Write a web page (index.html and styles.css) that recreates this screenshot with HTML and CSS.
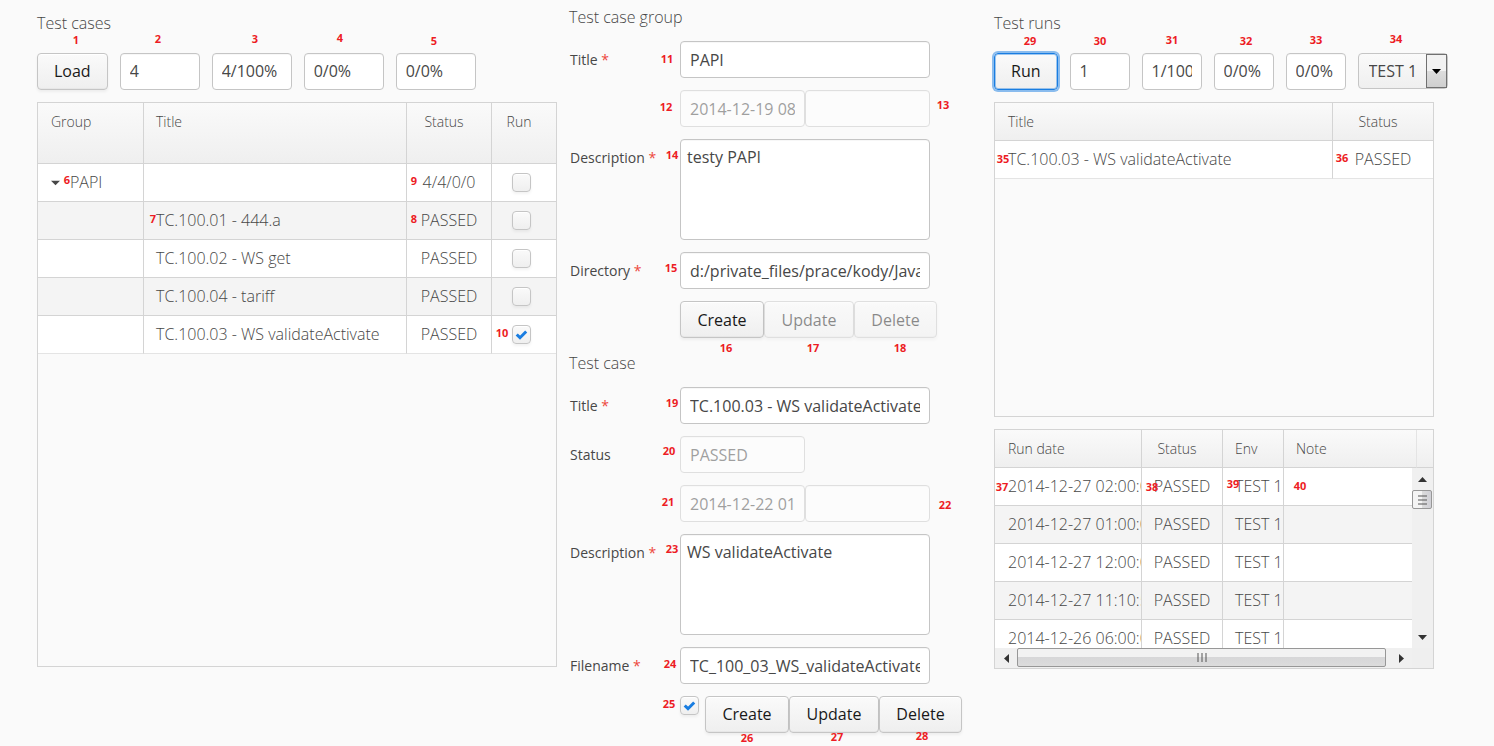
FILE: index.html
```html
<!DOCTYPE html>
<html lang="en">
<head>
<meta charset="utf-8">
<title>Test cases</title>
<link rel="stylesheet" href="styles.css">
</head>
<body>
<main class="page">

  <section class="panel">
    <h2 class="heading">Test cases</h2>
    <div class="toolbar">
      <button class="button" type="button">Load</button>
      <input class="field field-count" type="text" value="4" aria-label="Total">
      <input class="field field-count" type="text" value="4/100%" aria-label="Passed">
      <input class="field field-count" type="text" value="0/0%" aria-label="Failed">
      <input class="field field-count" type="text" value="0/0%" aria-label="Not run">
    </div>
    <div class="table-box cases-box">
      <table class="table cases">
        <colgroup><col class="col-group"><col><col class="col-result"><col class="col-run"></colgroup>
        <thead>
          <tr><th>Group</th><th>Title</th><th class="mid">Status</th><th class="mid">Run</th></tr>
        </thead>
        <tbody>
          <tr>
            <td><span class="node"><svg class="caret" viewBox="0 0 10 6" aria-hidden="true"><path d="M0 0.5h10L5 5.5z"/></svg>PAPI</span></td>
            <td></td><td class="mid">4/4/0/0</td>
            <td class="tick"><span class="check"><input type="checkbox" aria-label="Run PAPI"><svg viewBox="0 0 19 19" aria-hidden="true"><path d="M4.700 9.500l3.300 3.200 6.200-6.200"/></svg></span></td>
          </tr>
          <tr>
            <td></td><td>TC.100.01 - 444.a</td><td class="mid">PASSED</td>
            <td class="tick"><span class="check"><input type="checkbox" aria-label="Run TC.100.01"><svg viewBox="0 0 19 19" aria-hidden="true"><path d="M4.700 9.500l3.300 3.200 6.200-6.200"/></svg></span></td>
          </tr>
          <tr>
            <td></td><td>TC.100.02 - WS get</td><td class="mid">PASSED</td>
            <td class="tick"><span class="check"><input type="checkbox" aria-label="Run TC.100.02"><svg viewBox="0 0 19 19" aria-hidden="true"><path d="M4.700 9.500l3.300 3.200 6.200-6.200"/></svg></span></td>
          </tr>
          <tr>
            <td></td><td>TC.100.04 - tariff</td><td class="mid">PASSED</td>
            <td class="tick"><span class="check"><input type="checkbox" aria-label="Run TC.100.04"><svg viewBox="0 0 19 19" aria-hidden="true"><path d="M4.700 9.500l3.300 3.200 6.200-6.200"/></svg></span></td>
          </tr>
          <tr>
            <td></td><td>TC.100.03 - WS validateActivate</td><td class="mid">PASSED</td>
            <td class="tick"><span class="check"><input type="checkbox" checked aria-label="Run TC.100.03"><svg viewBox="0 0 19 19" aria-hidden="true"><path d="M4.700 9.500l3.300 3.200 6.200-6.200"/></svg></span></td>
          </tr>
        </tbody>
      </table>
    </div>
    <span class="pin pin-1">1</span><span class="pin pin-2">2</span><span class="pin pin-3">3</span>
    <span class="pin pin-4">4</span><span class="pin pin-5">5</span><span class="pin pin-6">6</span>
    <span class="pin pin-7">7</span><span class="pin pin-8">8</span><span class="pin pin-9">9</span>
    <span class="pin pin-10">10</span>
  </section>

  <section class="panel forms">
    <h2 class="heading">Test case group</h2>
    <div class="row">
      <label class="label" for="group-title">Title <span class="req">*</span></label>
      <input class="field field-wide" id="group-title" type="text" value="PAPI">
    </div>
    <div class="row">
      <div class="pair">
        <input class="field" type="text" value="2014-12-19 08" disabled aria-label="Group created">
        <input class="field" type="text" disabled aria-label="Group modified">
      </div>
    </div>
    <div class="row">
      <label class="label" for="group-desc">Description <span class="req">*</span></label>
      <textarea class="area" id="group-desc">testy PAPI</textarea>
    </div>
    <div class="row">
      <label class="label" for="group-dir">Directory <span class="req">*</span></label>
      <input class="field field-wide" id="group-dir" type="text" value="d:/private_files/prace/kody/Java/tests">
    </div>
    <div class="row">
      <div class="actions">
        <button class="button" type="button">Create</button>
        <button class="button" type="button" disabled>Update</button>
        <button class="button" type="button" disabled>Delete</button>
      </div>
    </div>

    <h2 class="heading">Test case</h2>
    <div class="row">
      <label class="label" for="case-title">Title <span class="req">*</span></label>
      <input class="field field-wide" id="case-title" type="text" value="TC.100.03 - WS validateActivate">
    </div>
    <div class="row">
      <label class="label" for="case-status">Status</label>
      <div class="pair"><input class="field" id="case-status" type="text" value="PASSED" disabled></div>
    </div>
    <div class="row">
      <div class="pair">
        <input class="field" type="text" value="2014-12-22 01" disabled aria-label="Case created">
        <input class="field" type="text" disabled aria-label="Case modified">
      </div>
    </div>
    <div class="row">
      <label class="label" for="case-desc">Description <span class="req">*</span></label>
      <textarea class="area" id="case-desc">WS validateActivate</textarea>
    </div>
    <div class="row">
      <label class="label" for="case-file">Filename <span class="req">*</span></label>
      <input class="field field-wide" id="case-file" type="text" value="TC_100_03_WS_validateActivate.xml">
    </div>
    <div class="row">
      <div class="actions actions-checked">
        <span class="check"><input type="checkbox" checked aria-label="Enabled"><svg viewBox="0 0 19 19" aria-hidden="true"><path d="M4.700 9.500l3.300 3.200 6.200-6.200"/></svg></span>
        <button class="button" type="button">Create</button>
        <button class="button" type="button">Update</button>
        <button class="button" type="button">Delete</button>
      </div>
    </div>
    <span class="pin pin-11">11</span><span class="pin pin-12">12</span><span class="pin pin-13">13</span>
    <span class="pin pin-14">14</span><span class="pin pin-15">15</span><span class="pin pin-16">16</span>
    <span class="pin pin-17">17</span><span class="pin pin-18">18</span><span class="pin pin-19">19</span>
    <span class="pin pin-20">20</span><span class="pin pin-21">21</span><span class="pin pin-22">22</span>
    <span class="pin pin-23">23</span><span class="pin pin-24">24</span><span class="pin pin-25">25</span>
    <span class="pin pin-26">26</span><span class="pin pin-27">27</span><span class="pin pin-28">28</span>
  </section>

  <section class="panel">
    <h2 class="heading">Test runs</h2>
    <div class="toolbar">
      <button class="button button-focus" type="button">Run</button>
      <input class="field field-small" type="text" value="1" aria-label="Runs">
      <input class="field field-small" type="text" value="1/100%" aria-label="Runs passed">
      <input class="field field-small" type="text" value="0/0%" aria-label="Runs failed">
      <input class="field field-small" type="text" value="0/0%" aria-label="Runs pending">
      <span class="picker">
        <select aria-label="Environment"><option>TEST 1</option></select>
        <span class="picker-arrow"><svg viewBox="0 0 9 5" aria-hidden="true"><path d="M0 0h9L4.500 5z"/></svg></span>
      </span>
    </div>
    <div class="table-box runs-box">
      <table class="table">
        <colgroup><col><col class="col-outcome"></colgroup>
        <thead><tr><th>Title</th><th class="mid">Status</th></tr></thead>
        <tbody><tr><td>TC.100.03 - WS validateActivate</td><td class="mid">PASSED</td></tr></tbody>
      </table>
    </div>
    <div class="table-box history-box">
      <div class="history-view">
        <table class="table history">
          <colgroup><col class="col-date"><col class="col-state"><col class="col-env"><col><col class="col-end"></colgroup>
          <thead><tr><th>Run date</th><th class="mid">Status</th><th>Env</th><th class="soft">Note</th><th></th></tr></thead>
          <tbody>
            <tr><td>2014-12-27 02:00:00</td><td class="mid">PASSED</td><td>TEST 1</td><td colspan="2"></td></tr>
            <tr><td>2014-12-27 01:00:00</td><td class="mid">PASSED</td><td>TEST 1</td><td colspan="2"></td></tr>
            <tr><td>2014-12-27 12:00:00</td><td class="mid">PASSED</td><td>TEST 1</td><td colspan="2"></td></tr>
            <tr><td>2014-12-27 11:10:51</td><td class="mid">PASSED</td><td>TEST 1</td><td colspan="2"></td></tr>
            <tr><td>2014-12-26 06:00:00</td><td class="mid">PASSED</td><td>TEST 1</td><td colspan="2"></td></tr>
          </tbody>
        </table>
      </div>
      <div class="vbar" aria-hidden="true">
        <span class="bar-end"><svg width="9" height="5" viewBox="0 0 9 5"><path d="M0 5h9L4.500 0z"/></svg></span>
        <span class="vthumb"><svg width="9" height="10" viewBox="0 0 9 10"><path d="M0 1h9M0 5h9M0 9h9"/></svg></span>
        <span class="bar-space"></span>
        <span class="bar-end"><svg width="9" height="5" viewBox="0 0 9 5"><path d="M0 0h9L4.500 5z"/></svg></span>
      </div>
      <div class="hbar" aria-hidden="true">
        <span class="bar-end"><svg width="5" height="9" viewBox="0 0 5 9"><path d="M5 0v9L0 4.500z"/></svg></span>
        <span class="hthumb"><svg width="10" height="9" viewBox="0 0 10 9"><path d="M1 0v9M5 0v9M9 0v9"/></svg></span>
        <span class="bar-space-end"></span>
        <span class="bar-end"><svg width="5" height="9" viewBox="0 0 5 9"><path d="M0 0v9L5 4.500z"/></svg></span>
      </div>
      <div class="corner"></div>
    </div>
    <span class="pin pin-29">29</span><span class="pin pin-30">30</span><span class="pin pin-31">31</span>
    <span class="pin pin-32">32</span><span class="pin pin-33">33</span><span class="pin pin-34">34</span>
    <span class="pin pin-35">35</span><span class="pin pin-36">36</span><span class="pin pin-37">37</span>
    <span class="pin pin-38">38</span><span class="pin pin-39">39</span><span class="pin pin-40">40</span>
  </section>

</main>
</body>
</html>
```

FILE: styles.css
```css
* { box-sizing: border-box; }

body {
  margin: 0;
  background: #fafafa;
  color: #474747;
  font: 300 16px/24px "Open Sans", sans-serif;
}

.page {
  display: grid;
  grid-template-columns: minmax(480px, 520fr) 413px minmax(440px, 440fr);
  column-gap: 12px;
  align-items: start;
  min-height: 100vh;
  padding: 0 60px 12px 37px;
}

.panel {
  position: relative;
  min-width: 0;
  padding-top: 11px;
}

.heading {
  margin: 0;
  font-size: 16px;
  font-weight: 300;
  line-height: 25px;
}

.toolbar {
  display: flex;
  gap: 12px;
  margin: 17px 0 12px;
}

/* Controls */

.button,
.field,
.area,
.picker select {
  flex: none;
  margin: 0;
  border: 1px solid #c5c5c5;
  border-radius: 4px;
  font: 400 16px/24px "Open Sans", sans-serif;
  color: #474747;
}

.button {
  height: 37px;
  padding: 0 16px;
  background: linear-gradient(#fafafa 2%, #efefef 98%);
  box-shadow: inset 0 1px 0 #fff, inset 0 -1px 0 #e7e7e7, 0 2px 3px rgba(0, 0, 0, 0.05);
  color: #191919;
}

.button:disabled {
  opacity: 0.5;
}

.button-focus {
  border-color: #197de1;
  box-shadow: inset 0 0 0 1px rgba(25, 125, 225, 0.4), 0 0 0 2px rgba(25, 125, 225, 0.5);
}

.field {
  height: 37px;
  padding: 0 9px;
  background: #fff;
  box-shadow: inset 0 1px 0 #f7f7f7;
}

.field:disabled {
  opacity: 0.5;
}

.toolbar .button,
.toolbar .field,
.actions-checked .button {
  padding-bottom: 2px;
}

.field-count { width: 80px; }
.field-small { width: 60px; }
.field-wide { width: 250px; }

.area {
  display: block;
  width: 250px;
  height: 101px;
  padding: 5px 6px;
  resize: none;
  background: #fff;
  box-shadow: inset 0 1px 0 #f7f7f7;
}

.picker {
  position: relative;
  flex: none;
  width: 90px;
}

.picker select {
  appearance: none;
  width: 100%;
  height: 36px;
  padding: 0 10px;
  background: linear-gradient(#fafafa, #efefef);
}

.picker-arrow {
  position: absolute;
  top: 1px;
  right: 1px;
  display: grid;
  place-items: center;
  width: 21px;
  height: 34px;
  border: 1px solid #707070;
  background: linear-gradient(#f2f2f2 50%, #dddddd 50%, #cfcfcf);
  pointer-events: none;
}

.picker-arrow svg {
  width: 9px;
  height: 5px;
  fill: #000;
}

.check {
  display: inline-grid;
  width: 19px;
  height: 19px;
  vertical-align: middle;
}

.check input,
.check svg {
  grid-area: 1 / 1;
  width: 19px;
  height: 19px;
  margin: 0;
}

.check input {
  appearance: none;
  border: 1px solid #c5c5c5;
  border-radius: 4px;
  background: linear-gradient(#fafafa, #efefef);
  box-shadow: inset 0 1px 0 #fff, 0 2px 3px rgba(0, 0, 0, 0.05);
}

.check svg {
  visibility: hidden;
  fill: none;
  stroke: #197de1;
  stroke-width: 3;
  pointer-events: none;
}

.check input:checked + svg { visibility: visible; }

/* Forms */

.forms {
  display: grid;
  row-gap: 12px;
  padding-top: 4px;
}

.forms .heading {
  padding-top: 2px;
  line-height: 23px;
}

.row {
  display: grid;
  grid-template-columns: 110px 1fr;
  padding-left: 1px;
}

.row > :not(.label) { grid-column: 2; }

.label {
  font-size: 14px;
  font-weight: 400;
  line-height: 37px;
}

.req { color: #ed473b; }

.pair {
  display: grid;
  grid-template-columns: 125px 125px;
}

.actions {
  display: grid;
  grid-template-columns: 84px 90px 83px;
  align-items: start;
}

.actions-checked { grid-template-columns: 25px 84px 90px 83px; }

/* Tables */

.table-box {
  overflow: hidden;
  border: 1px solid #d4d4d4;
}

.cases-box { height: 565px; }
.runs-box { height: 315px; }

.table {
  width: 100%;
  table-layout: fixed;
  border-collapse: separate;
  border-spacing: 0;
}

.col-group { width: 106px; }
.col-result { width: 85px; }
.col-run { width: 64px; }
.col-outcome { width: 100px; }
.col-date { width: 147px; }
.col-state { width: 81px; }
.col-env { width: 61px; }
.col-end { width: 16px; }

.table th,
.table td {
  overflow: hidden;
  height: 38px;
  padding: 0 0 0 12px;
  border-right: 1px solid #d4d4d4;
  border-bottom: 1px solid #d4d4d4;
  line-height: 37px;
  text-align: left;
  white-space: nowrap;
}

.table th {
  vertical-align: top;
  background: linear-gradient(#fafafa, #efefef);
  font-size: 14px;
  font-weight: 300;
}

.cases th { height: 61px; }

.table th:first-child,
.table td:first-child { padding-left: 13px; }

.table th:last-child,
.table td:last-child { border-right: 0; }

.table .mid {
  padding: 0;
  text-align: center;
}

.table th.mid { padding-right: 10px; }
.table th.soft { border-right-color: #e4e4e4; }

.table td { background: #fff; }
.table tr:nth-child(even) td { background: #f4f4f4; }
.table tr:last-child td { border-bottom-color: #e4e4e4; }

.table .tick {
  padding: 0 5px 0 0;
  line-height: 0;
  text-align: center;
}

.node {
  display: flex;
  align-items: center;
  gap: 10px;
}

.caret {
  width: 9px;
  height: 6px;
  fill: #474747;
}

.history-box {
  display: grid;
  grid-template: 38px 1fr 20px / minmax(0, 1fr) 21px;
  height: 240px;
  margin-top: 12px;
}

.history-view {
  grid-area: 1 / 1 / 3 / 3;
  overflow: hidden;
  min-height: 0;
}

/* Scroll bars */

.vbar,
.hbar {
  z-index: 1;
  display: flex;
  background: #f0f0f0;
}

.vbar {
  grid-area: 2 / 2;
  flex-direction: column;
  padding-right: 1px;
}

.hbar { grid-area: 3 / 1; }

.corner {
  grid-area: 3 / 2;
  background: #efefef;
}

.bar-end {
  display: grid;
  flex: 0 0 22px;
  place-items: center;
  fill: #333;
}

.vthumb,
.hthumb {
  display: grid;
  place-items: center;
  border: 1px solid #979797;
  border-radius: 2px;
  stroke: #555;
}

.vthumb {
  flex: 0 0 19px;
  background: linear-gradient(90deg, #f4f4f4 50%, #dcdcdc 50%, #d0d0d6);
}

.hthumb {
  flex: 1;
  margin-bottom: 1px;
  background: linear-gradient(#f2f2f2 45%, #d6d6d8 45%, #dcdcdc);
}

.bar-space { flex: 1; }
.bar-space-end { flex: 0 0 4px; }

/* Numbered callouts laid over the controls */

.pin {
  position: absolute;
  z-index: 2;
  width: 16px;
  color: #ed1c24;
  font-size: 11px;
  font-weight: 700;
  line-height: 12px;
  text-align: center;
  pointer-events: none;
}

.pin-1 { left: 31px; top: 34px; }
.pin-2 { left: 113px; top: 33px; }
.pin-3 { left: 210px; top: 33px; }
.pin-4 { left: 295px; top: 32px; }
.pin-5 { left: 389px; top: 35px; }
.pin-6 { left: 22px; top: 174px; }
.pin-7 { left: 108px; top: 213px; }
.pin-8 { right: 135px; top: 213px; }
.pin-9 { right: 135px; top: 175px; }
.pin-10 { right: 47px; top: 327px; }
.pin-11 { left: 90px; top: 53px; }
.pin-12 { left: 89px; top: 101px; }
.pin-13 { left: 366px; top: 99px; }
.pin-14 { left: 95px; top: 149px; }
.pin-15 { left: 94px; top: 262px; }
.pin-16 { left: 149px; top: 342px; }
.pin-17 { left: 236px; top: 342px; }
.pin-18 { left: 323px; top: 342px; }
.pin-19 { left: 95px; top: 397px; }
.pin-20 { left: 92px; top: 445px; }
.pin-21 { left: 91px; top: 496px; }
.pin-22 { left: 368px; top: 499px; }
.pin-23 { left: 95px; top: 543px; }
.pin-24 { left: 93px; top: 658px; }
.pin-25 { left: 92px; top: 698px; }
.pin-26 { left: 170px; top: 732px; }
.pin-27 { left: 260px; top: 731px; }
.pin-28 { left: 345px; top: 730px; }
.pin-29 { left: 28px; top: 35px; }
.pin-30 { left: 98px; top: 35px; }
.pin-31 { left: 170px; top: 34px; }
.pin-32 { left: 244px; top: 35px; }
.pin-33 { left: 314px; top: 34px; }
.pin-34 { left: 394px; top: 33px; }
.pin-35 { left: 1px; top: 153px; }
.pin-36 { right: 84px; top: 152px; }
.pin-37 { left: 0; top: 481px; }
.pin-38 { left: 150px; top: 481px; }
.pin-39 { left: 231px; top: 478px; }
.pin-40 { left: 298px; top: 480px; }
```
